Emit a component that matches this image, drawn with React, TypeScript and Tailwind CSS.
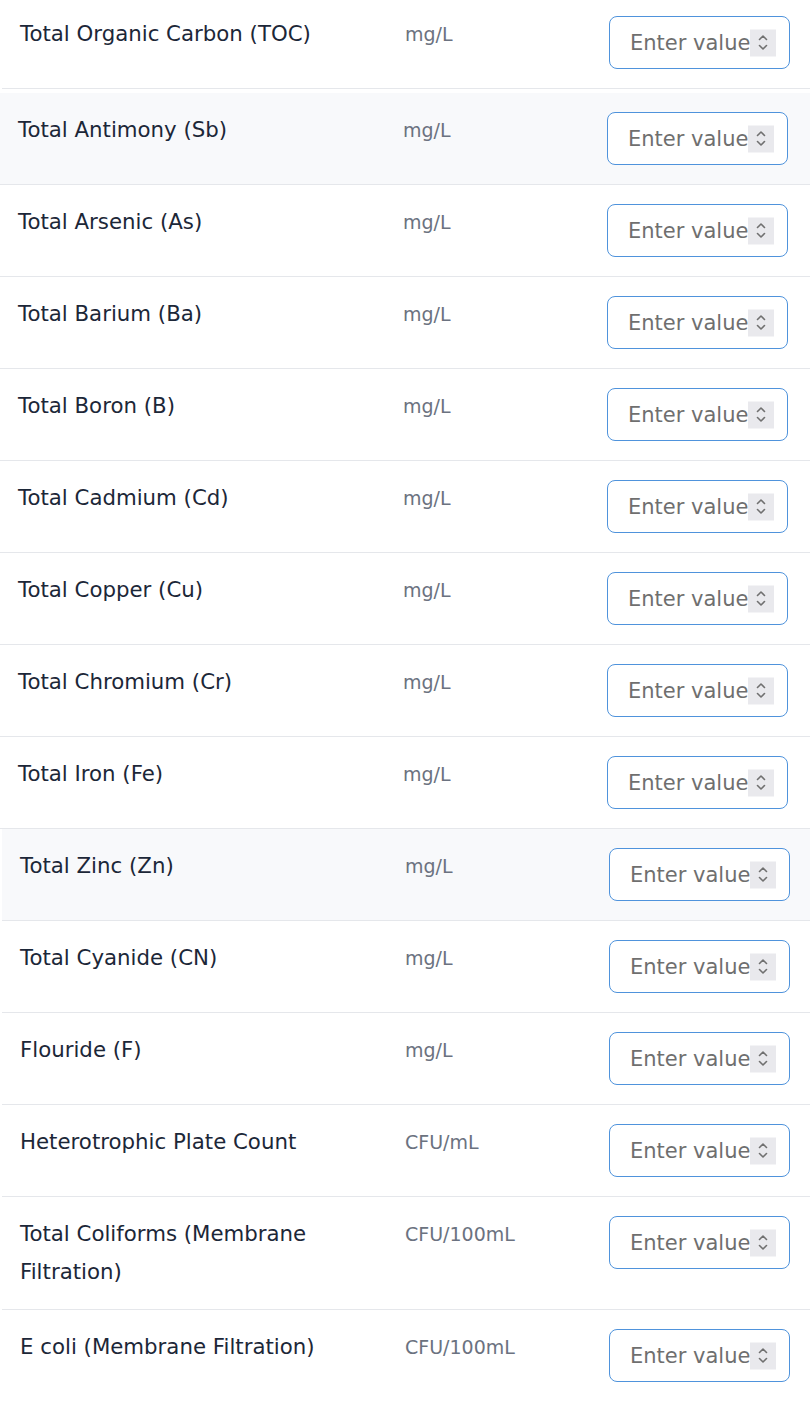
import React from "react";

type Row = { name: string; unit: string; shade?: boolean; shift?: boolean };

const rows: Row[] = [
  { name: "Total Organic Carbon (TOC)", unit: "mg/L", shift: true },
  { name: "Total Antimony (Sb)", unit: "mg/L", shade: true },
  { name: "Total Arsenic (As)", unit: "mg/L" },
  { name: "Total Barium (Ba)", unit: "mg/L" },
  { name: "Total Boron (B)", unit: "mg/L" },
  { name: "Total Cadmium (Cd)", unit: "mg/L" },
  { name: "Total Copper (Cu)", unit: "mg/L" },
  { name: "Total Chromium (Cr)", unit: "mg/L" },
  { name: "Total Iron (Fe)", unit: "mg/L" },
  { name: "Total Zinc (Zn)", unit: "mg/L", shade: true, shift: true },
  { name: "Total Cyanide (CN)", unit: "mg/L", shift: true },
  { name: "Flouride (F)", unit: "mg/L", shift: true },
  { name: "Heterotrophic Plate Count", unit: "CFU/mL", shift: true },
  { name: "Total Coliforms (Membrane Filtration)", unit: "CFU/100mL", shift: true },
  { name: "E coli (Membrane Filtration)", unit: "CFU/100mL", shift: true },
];

function Spinner() {
  return (
    <div className="pointer-events-none absolute right-[13px] top-1/2 flex h-[27px] w-[26px] -translate-y-1/2 items-center justify-center bg-[#e9e9ed]">
      <svg width="12" height="20" viewBox="0 0 12 20" fill="none" stroke="#707070" strokeWidth="1.6" strokeLinecap="round" strokeLinejoin="round">
        <path d="M2.5 7 L6 3.5 L9.5 7" />
        <path d="M2.5 13 L6 16.5 L9.5 13" />
      </svg>
    </div>
  );
}

function ValueInput() {
  return (
    <div className="relative my-[1px] h-[53px] w-[181px] rounded-[8px] border-[1.5px] border-[#4f93dc] bg-white">
      <input
        type="text"
        placeholder="Enter value"
        className="h-full w-full rounded-[8px] bg-transparent pl-[20px] pr-[38px] pt-[1px] text-[21px] text-[#1e293b] outline-none placeholder:text-[#6f6f6f]"
      />
      <Spinner />
    </div>
  );
}

export default function App() {
  return (
    <div className="min-h-[1404px] bg-white font-['DejaVu_Sans',sans-serif]">
      <div className="-mt-[3px]">
        {rows.map((r, i) => (
          <div
            key={r.name}
            className={`grid grid-cols-[385px_204px_181px] items-start border-b border-[#e5e7eb] py-[18px] pl-[18px] ${
              r.shade ? "bg-[#f8f9fb]" : "bg-white"
            } ${r.shift ? "ml-[2px]" : ""} ${i === 1 ? "mt-[4px]" : ""} ${i === rows.length - 1 ? "border-b-0" : ""}`}
          >
            <div className="max-w-[340px] text-[21.3px] leading-[38px] text-[#1c2738]">{r.name}</div>
            <div className="text-[19px] leading-[39px] text-[#6b7280]">{r.unit}</div>
            <ValueInput />
          </div>
        ))}
      </div>
    </div>
  );
}
